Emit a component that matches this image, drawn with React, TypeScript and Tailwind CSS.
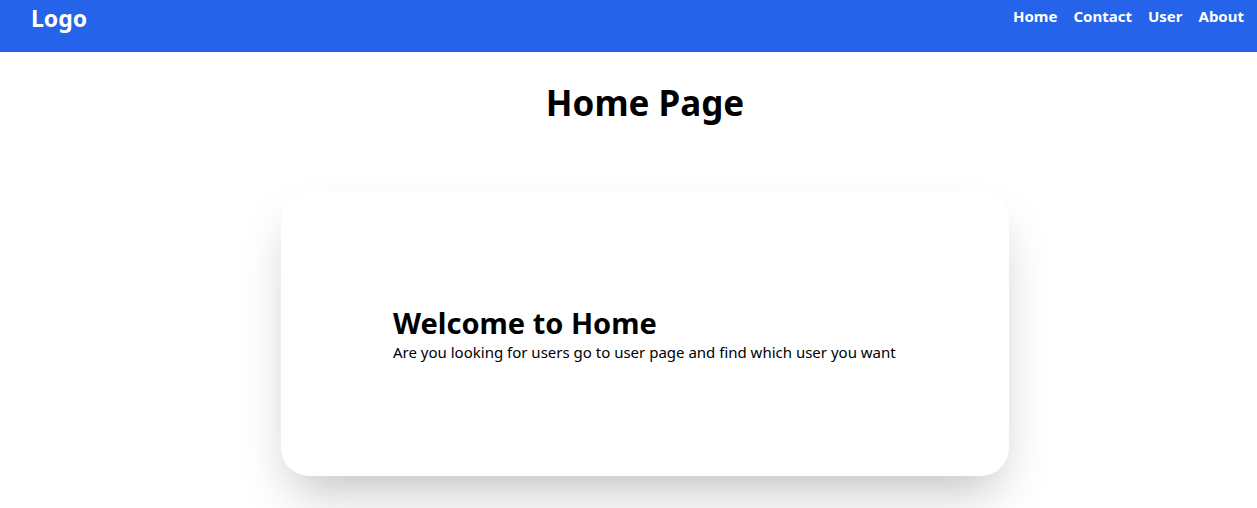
export default function App() {
  return (
    <div className="min-h-screen bg-white text-black font-['Noto_Sans',sans-serif]">
      {/* Navbar */}
      <nav className="h-[52px] bg-[#2563eb] flex items-start justify-between pl-[31px] pr-[13px]">
        <div className="text-white text-[23px] font-bold leading-[36px]">Logo</div>
        <ul className="flex gap-[16px] text-white text-[15px] font-bold leading-[33px]">
          <li>Home</li>
          <li>Contact</li>
          <li>User</li>
          <li>About</li>
        </ul>
      </nav>

      {/* Content */}
      <main className="flex flex-col items-center pl-[33px]">
        <h1 className="mt-[28px] text-[35px] font-bold leading-[46px]">Home Page</h1>
        <div className="mt-[66px] w-[728px] h-[284px] bg-white rounded-[28px] shadow-2xl flex flex-col justify-center px-[112px]">
          <h2 className="text-[29px] font-bold leading-[36px]">Welcome to Home</h2>
          <p className="text-[15px] leading-[22px]">Are you looking for users go to user page and find which user you want</p>
        </div>
      </main>
    </div>
  );
}
